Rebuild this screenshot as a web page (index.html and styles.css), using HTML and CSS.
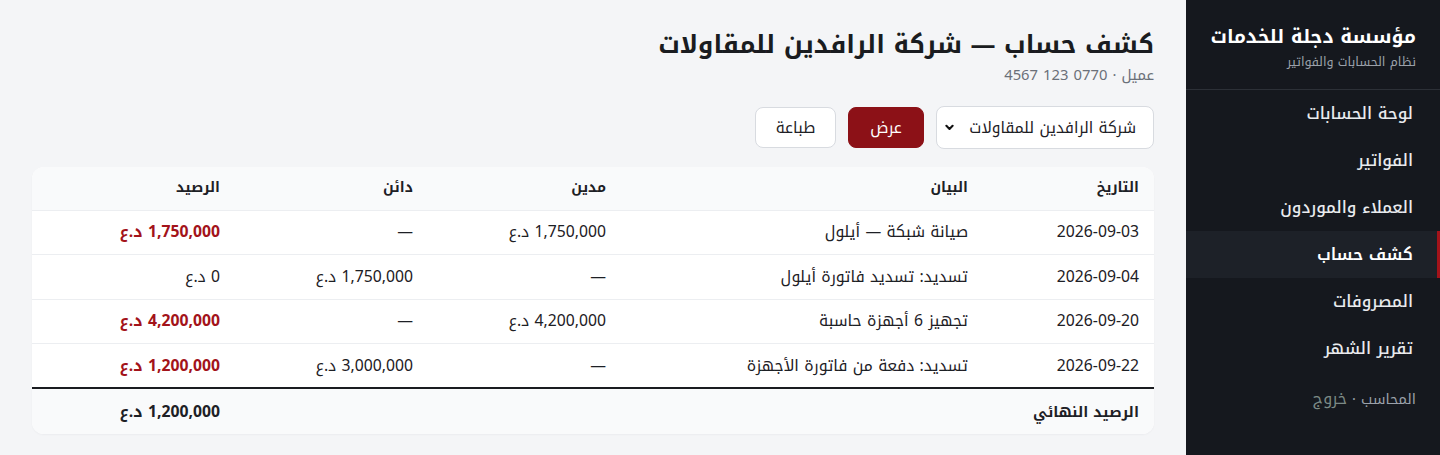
FILE: index.html
```html
<!DOCTYPE html>
<html lang="ar" dir="rtl">
<head>
<meta charset="utf-8">
<title>كشف حساب</title>
<link rel="stylesheet" href="styles.css">
</head>
<body>
<div class="app">
  <aside class="sidebar">
    <div class="brand">
      <div class="brand-title">مؤسسة دجلة للخدمات</div>
      <div class="brand-sub">نظام الحسابات والفواتير</div>
    </div>
    <nav class="nav">
      <a class="nav-item">لوحة الحسابات</a>
      <a class="nav-item">الفواتير</a>
      <a class="nav-item">العملاء والموردون</a>
      <a class="nav-item active">كشف حساب</a>
      <a class="nav-item">المصروفات</a>
      <a class="nav-item">تقرير الشهر</a>
    </nav>
    <div class="side-foot">المحاسب · <span class="logout">خروج</span></div>
  </aside>
  <main class="main">
    <h1 class="title">كشف حساب — شركة الرافدين للمقاولات</h1>
    <div class="subtitle">عميل · 0770 123 4567</div>
    <div class="controls">
      <div class="select">
        <span>شركة الرافدين للمقاولات</span>
        <svg class="chev" width="9" height="7" viewBox="0 0 9 7"><path d="M1.4 1.8 L4.5 4.9 L7.6 1.8" fill="none" stroke="#111" stroke-width="2.1" stroke-linecap="round" stroke-linejoin="round"/></svg>
      </div>
      <button class="btn btn-primary">عرض</button>
      <button class="btn btn-light">طباعة</button>
    </div>
    <div class="card">
      <table class="tbl">
        <colgroup>
          <col class="c1"><col class="c2"><col class="c3"><col class="c4"><col class="c5">
        </colgroup>
        <thead>
          <tr><th>التاريخ</th><th>البيان</th><th>مدين</th><th>دائن</th><th>الرصيد</th></tr>
        </thead>
        <tbody>
          <tr><td>2026-09-03</td><td>صيانة شبكة — أيلول</td><td>1,750,000 د.ع</td><td>—</td><td class="neg">1,750,000 د.ع</td></tr>
          <tr><td>2026-09-04</td><td>تسديد: تسديد فاتورة أيلول</td><td>—</td><td>1,750,000 د.ع</td><td>0 د.ع</td></tr>
          <tr><td>2026-09-20</td><td>تجهيز 6 أجهزة حاسبة</td><td>4,200,000 د.ع</td><td>—</td><td class="neg">4,200,000 د.ع</td></tr>
          <tr><td>2026-09-22</td><td>تسديد: دفعة من فاتورة الأجهزة</td><td>—</td><td>3,000,000 د.ع</td><td class="neg">1,200,000 د.ع</td></tr>
        </tbody>
        <tfoot>
          <tr><td colspan="4">الرصيد النهائي</td><td>1,200,000 د.ع</td></tr>
        </tfoot>
      </table>
    </div>
  </main>
</div>
</body>
</html>
```
FILE: styles.css
```css
* { box-sizing: border-box; }
html, body { margin: 0; padding: 0; }
body {
  font-family: "Noto Kufi Arabic", "Noto Sans Arabic", "Noto Sans", sans-serif;
  background: #f4f5f7;
  color: #1d2025;
  height: 455px;
  overflow: hidden;
}
.app {
  display: flex;
  flex-direction: row;
  height: 455px;
}
.sidebar {
  width: 254px;
  flex: 0 0 254px;
  background: #15181e;
  color: #f1f2f4;
  display: flex;
  flex-direction: column;
}
.brand {
  padding: 22px 24px 0;
  height: 90px;
  border-bottom: 1px solid #2c3037;
}
.brand-title {
  font-size: 19px;
  font-weight: 700;
  line-height: 30px;
  color: #ffffff;
}
.brand-sub {
  font-size: 12.5px;
  color: #9ba1aa;
  line-height: 20px;
}
.nav {
  display: flex;
  flex-direction: column;
}
.nav-item {
  display: block;
  padding: 0 27px;
  height: 47px;
  line-height: 47px;
  font-size: 16.5px;
  font-weight: 500;
  color: #e9ebee;
}
.nav-item.active {
  background: #1d2128;
  border-right: 3px solid #a3131a;
  padding-right: 24px;
  font-weight: 600;
  color: #ffffff;
}
.side-foot {
  padding: 16px 24px;
  font-size: 14.5px;
  line-height: 22px;
  color: #9ba1aa;
}
.logout { color: #7c8a86; font-size: 16px; }
.main {
  flex: 1;
  padding: 25px 32px 0;
  min-width: 0;
}
.title {
  margin: 0;
  font-size: 25px;
  font-weight: 700;
  line-height: 40px;
  color: #1a1c20;
}
.subtitle {
  font-size: 14.8px;
  color: #6b7079;
  line-height: 22px;
  margin-top: -1px;
}
.controls {
  display: flex;
  align-items: center;
  gap: 12px;
  margin-top: 20px;
}
.select {
  width: 218px;
  height: 43px;
  background: #fff;
  border: 1px solid #d8dbe0;
  border-radius: 8px;
  display: flex;
  align-items: center;
  justify-content: space-between;
  padding: 0 17px 0 8px;
  font-size: 15.5px;
  color: #1d2025;
}
.chev { display: block; }
.btn {
  height: 41px;
  border-radius: 8px;
  font-family: inherit;
  font-size: 15.5px;
  padding: 0;
  cursor: pointer;
}
.btn-primary {
  background: #8c1117;
  border: 1px solid #8c1117;
  color: #fff;
  width: 76px;
}
.btn-light {
  background: #fff;
  border: 1px solid #d8dbe0;
  color: #1d2025;
  width: 81px;
}
.card {
  margin-top: 18px;
  background: #fff;
  border-radius: 12px;
  overflow: hidden;
  box-shadow: 0 1px 2px rgba(16,24,40,0.04);
}
.tbl {
  width: 100%;
  border-collapse: collapse;
  table-layout: fixed;
  font-size: 15.75px;
}
.c1 { width: 171px; }
.c2 { width: 362px; }
.c3 { width: 193px; }
.c4 { width: 193px; }
.c5 { width: 203px; }
.tbl th, .tbl td {
  text-align: right;
  padding: 0 15px;
  height: 44.5px;
  line-height: 20px;
  white-space: nowrap;
}
.tbl th {
  background: #f9fafb;
  font-weight: 700;
  font-size: 14px;
  height: 43px;
  border-bottom: 1px solid #eceef1;
}
.tbl tbody td {
  border-bottom: 1px solid #eceef1;
}
.tbl tbody tr:last-child td {
  border-bottom: 2px solid #1a1c20;
}
.tbl td.neg { color: #a3131a; font-weight: 700; }
.tbl tfoot td {
  background: #f9fafb;
  font-weight: 700;
  font-size: 14.5px;
  height: 46px;
}
.tbl tfoot td:last-child { font-size: 15.75px; }
```
